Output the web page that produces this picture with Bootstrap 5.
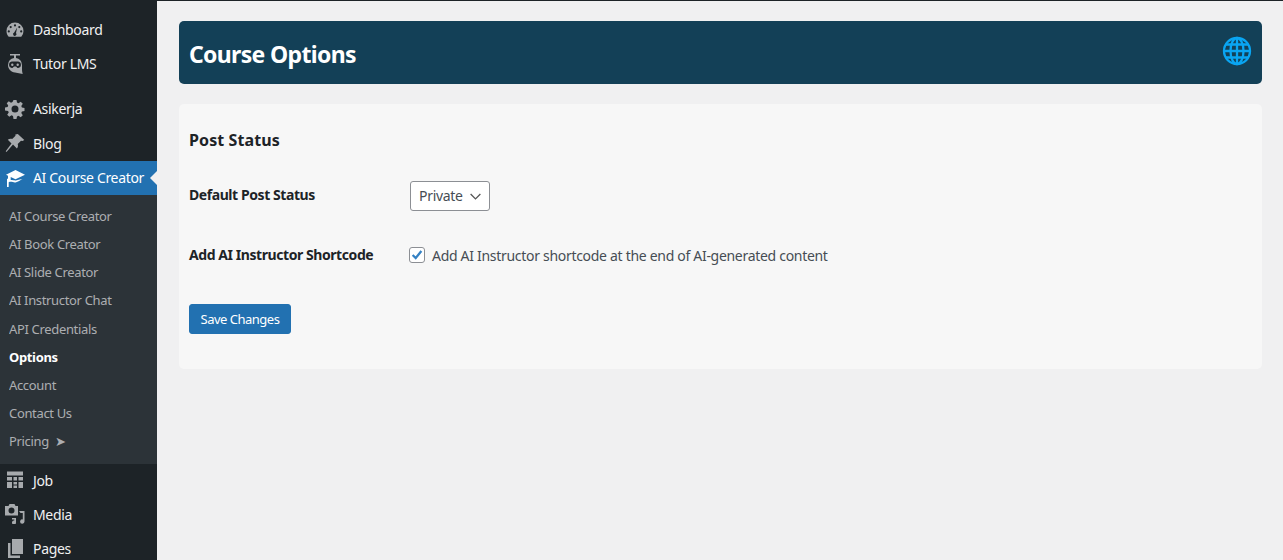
<!DOCTYPE html>
<html lang="en">
<head>
<meta charset="utf-8">
<title>Course Options</title>
<link href="https://cdn.jsdelivr.net/npm/bootstrap@5.3.0/dist/css/bootstrap.min.css" rel="stylesheet">
<style>
html,body{height:560px;overflow:hidden}
body{background:#f0f0f1;font-family:"Noto Sans","Open Sans",sans-serif;font-size:14px;color:#464d54;letter-spacing:-.3px}
.wp-top{height:1px;background:#1d2327}
.wp-shell{height:559px}
.wp-side{width:157px;background:#1d2327;padding-top:12px;overflow:hidden}
.wp-item{height:34px;color:#f0f0f1;font-size:14px;padding:0 0 1px 5px;gap:8px;letter-spacing:-.34px}
.wp-item svg{width:20px;height:20px;fill:#a7aaad;flex:none}
.wp-tall{height:35px}
.wp-item.wp-on{background:#2271b1;color:#fff;position:relative;height:34px}
.wp-item.wp-on svg{fill:#fff}
.wp-item.wp-on::after{content:"";position:absolute;right:0;top:10px;border:7px solid transparent;border-right-color:#f0f0f1;border-left:0}
.wp-gap{height:11px}
.wp-sub{background:#2c3338;padding:7.1px 0 8.9px 9px;font-size:13px;letter-spacing:-.34px}
.wp-sub div{height:28.12px;line-height:28px;color:#c3c4c7;opacity:.85;white-space:nowrap}
.wp-sub .wp-cur{color:#fff;font-weight:700;opacity:1}
.wp-main{padding:20px 21px 0 22px}
.wp-head{height:63px;background:#134057;border-radius:5px;padding:0 10px;margin-bottom:20px}
.wp-head h1{font-size:23px;font-weight:700;color:#fff;margin:0;padding-top:4px;letter-spacing:-.66px}
.wp-globe{width:30px;height:30px;margin:0 0 3px}
.wp-panel{height:265px;background:#f7f7f7;border-radius:5px;padding:24px 10px 0}
.wp-panel h2{font-size:16px;font-weight:700;color:#1d2327;margin:0;line-height:24px;letter-spacing:.1px}
.wp-label{width:220px;font-weight:700;color:#1d2327;font-size:14px;letter-spacing:-.43px;padding-bottom:2px}
.wp-r1{margin-top:29px;height:30px}
.wp-r1 .wp-label{padding-bottom:4px}
.wp-r2{margin-top:29px;height:30px}
.wp-select.form-select{width:80px;height:30px;margin-left:1px;font-size:14px;color:#464d54;border-color:#8c8f94;border-radius:3px;padding:0 24px 2px 8px;background-color:#fff;background-image:url("data:image/svg+xml,%3csvg xmlns='http://www.w3.org/2000/svg' viewBox='0 0 16 16'%3e%3cpath fill='none' stroke='%23555' stroke-width='1.600' d='M2 5l6 6 6-6'/%3e%3c/svg%3e");background-position:right 7px center;background-size:13px 13px;letter-spacing:-.3px}
.wp-check.form-check-input{width:16px;height:16px;margin:0 7px 0 0;border-color:#8c8f94;border-radius:3px;background-color:#fff}
.wp-check.form-check-input:checked{background-color:#fff;border-color:#8c8f94;background-image:url("data:image/svg+xml,%3csvg xmlns='http://www.w3.org/2000/svg' viewBox='0 0 16 16'%3e%3cpath fill='none' stroke='%233582c4' stroke-width='2.600' d='M3 8l3.500 3.500L13 3.500'/%3e%3c/svg%3e");background-size:14px 14px}
.wp-save.btn{display:block;width:102px;height:30px;margin-top:34px;background:#2271b1;border-color:#2271b1;color:#fff;font-size:13px;border-radius:3px;padding:1px 0 0;letter-spacing:-.5px}
</style>
</head>
<body>
<div class="wp-top"></div>
<div class="wp-shell d-flex">
  <nav class="wp-side flex-shrink-0">
    <div class="wp-item d-flex align-items-center"><svg viewBox="0 0 20 20"><path fill-rule="evenodd" d="M10 2.500a8.500 8.500 0 0 0-8.500 8.500c0 2.300.8 4.300 2.200 5.800h12.600a8.500 8.500 0 0 0 2.200-5.800A8.500 8.500 0 0 0 10 2.500zM10 4.300a1.100 1.100 0 1 1 0 2.200 1.100 1.100 0 0 1 0-2.200zM5.700 6a1.100 1.100 0 1 1 0 2.200 1.100 1.100 0 0 1 0-2.200zM14.300 6a1.100 1.100 0 1 1 0 2.200 1.100 1.100 0 0 1 0-2.200zM3.800 10.300a1.100 1.100 0 1 1 0 2.200 1.100 1.100 0 0 1 0-2.200zM16.200 10.300a1.100 1.100 0 1 1 0 2.200 1.100 1.100 0 0 1 0-2.200zM12.200 7.500L11 13a1.700 1.700 0 1 1-1.800-.4z"/></svg>Dashboard</div>
    <div class="wp-item d-flex align-items-center"><svg viewBox="0 0 20 20"><path fill-rule="evenodd" d="M5 0h10v1.500h-4V4a7 7 0 0 1 6 7v4c0 2 .3 3.500.7 5L10 18.500C6 18 3 15 3 11a7 7 0 0 1 6-7V1.500H5zM6.800 7.500A3.300 3.300 0 0 0 6.800 14h.7l1.500-1.500h2l1.500 1.500h.7a3.300 3.300 0 0 0 0-6.500zM7.300 9.500a1.200 1.200 0 1 1 0 2.400 1.200 1.200 0 0 1 0-2.400zM12.700 9.500a1.200 1.200 0 1 1 0 2.400 1.200 1.200 0 0 1 0-2.400z"/></svg>Tutor LMS</div>
    <div class="wp-gap"></div>
    <div class="wp-item d-flex align-items-center"><svg viewBox="0 0 20 20"><path fill-rule="evenodd" d="M8.500 1h3l.5 2.600 1.500.6 2.200-1.500 2.100 2.100-1.500 2.200.6 1.500 2.600.5v3l-2.600.5-.6 1.500 1.500 2.200-2.100 2.100-2.200-1.500-1.500.6-.5 2.600h-3L8 16.900l-1.500-.6-2.200 1.500-2.100-2.100 1.500-2.200-.6-1.500L0 11.500v-3l2.600-.5.600-1.500L1.700 4.300l2.100-2.100L6 3.700l1.500-.6zM10 6.500a3.500 3.500 0 1 0 0 7 3.500 3.500 0 0 0 0-7z"/></svg>Asikerja</div>
    <div class="wp-item wp-tall d-flex align-items-center"><svg viewBox="0 0 20 20"><path d="M12.800 1l6.500 6-1.800 1-1.500-.3-3.300 3.300c.6 1.500.3 3.200-.8 4.500L8 11.500 1.500 19l-.8-.7L6.500 10.500 2.800 6.800c1.200-1.100 3-1.400 4.400-.8l3.300-3.200-.2-1.300z"/></svg>Blog</div>
    <div class="wp-item wp-on d-flex align-items-center"><svg viewBox="0 0 20 20"><path d="M10.500 2L1 6.800l2 1v3h-1V19h1.700v-4.700c3-1.500 4.800 1 7.500 0s4.300-2.300 6.300-3.300c-2 .3-3.600.8-5.700 1.300-2.100.6-3.500-.2-6.100-.2V8.900l4.800 2.400L20 6.800z"/></svg>AI Course Creator</div>
    <div class="wp-sub">
      <div>AI Course Creator</div>
      <div>AI Book Creator</div>
      <div>AI Slide Creator</div>
      <div>AI Instructor Chat</div>
      <div>API Credentials</div>
      <div class="wp-cur">Options</div>
      <div>Account</div>
      <div>Contact Us</div>
      <div>Pricing&nbsp; ➤</div>
    </div>
    <div class="wp-item d-flex align-items-center"><svg viewBox="0 0 20 20"><path d="M2 1.500h16v4H2zM2 7h5v3.500H2zM8.500 7h3.500v3.500H8.500zM13.500 7H18v3.500h-4.500zM2 12h5v6H2zM8.500 12H12v2.500H8.500zM8.500 15.500H12V18H8.500zM13.500 12H18v6h-4.500z"/></svg>Job</div>
    <div class="wp-item d-flex align-items-center"><svg viewBox="0 0 20 20"><path fill-rule="evenodd" d="M4.500 0h5l1 2H13v9.500H0V2h3.500zM6.500 3.500a3 3 0 1 0 0 6 3 3 0 0 0 0-6z"/><path d="M14 7h5.500v10.500a2.200 2.200 0 1 1-1.700-2.100V9H15.500zM7 14h4v4.500a2 2 0 1 1-1.700-2V15.500H7z"/></svg>Media</div>
    <div class="wp-item d-flex align-items-center"><svg viewBox="0 0 20 20"><path d="M7 1h11v15H7z"/><path d="M3 5h2.500v12.500H15V20H3z"/></svg>Pages</div>
  </nav>
  <main class="wp-main flex-grow-1">
    <header class="wp-head d-flex align-items-center justify-content-between">
      <h1>Course Options</h1>
      <svg class="wp-globe" viewBox="0 0 30 30" fill="none" stroke="#0aa5f2" stroke-width="2.300"><circle cx="15" cy="15" r="13"/><ellipse cx="15" cy="15" rx="6.500" ry="13"/><path d="M15 2v26M2 15h26M4 8.500h22M4 21.500h22"/></svg>
    </header>
    <section class="wp-panel">
      <h2>Post Status</h2>
      <div class="wp-r1 d-flex align-items-center">
        <div class="wp-label">Default Post Status</div>
        <select class="form-select wp-select"><option>Private</option></select>
      </div>
      <div class="wp-r2 d-flex align-items-center">
        <div class="wp-label">Add AI Instructor Shortcode</div>
        <input class="form-check-input wp-check" type="checkbox" checked>
        <span>Add AI Instructor shortcode at the end of AI-generated content</span>
      </div>
      <button class="btn btn-primary wp-save" type="button">Save Changes</button>
    </section>
  </main>
</div>
<script src="https://cdn.jsdelivr.net/npm/bootstrap@5.3.0/dist/js/bootstrap.bundle.min.js"></script>
</body>
</html>
